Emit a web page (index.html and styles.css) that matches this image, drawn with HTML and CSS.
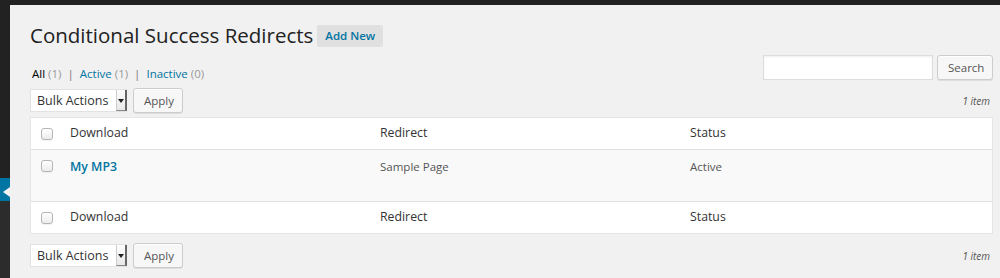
FILE: index.html
```html
<!DOCTYPE html>
<html lang="en">
<head>
    <meta charset="UTF-8">
    <title>Conditional Success Redirects</title>
    <link rel="stylesheet" href="styles.css">
</head>
<body>

    <div class="adminbar"></div>

    <div class="layout">

        <!-- Admin menu (collapsed strip) -->
        <aside class="sidebar">
            <div class="menu-top"></div>
            <div class="menu-current"><span class="menu-arrow"></span></div>
        </aside>

        <main class="wrap">

            <div class="page-title">
                <h2>Conditional Success Redirects</h2>
                <a href="#" class="add-new">Add New</a>
            </div>

            <div class="filter-bar">
                <ul class="subsubsub">
                    <li class="current">All <span class="count">(1)</span></li>
                    <li class="sep">|</li>
                    <li><a href="#">Active</a> <span class="count">(1)</span></li>
                    <li class="sep">|</li>
                    <li><a href="#">Inactive</a> <span class="count">(0)</span></li>
                </ul>
                <form class="search-box">
                    <input type="search" class="search-input">
                    <button type="button" class="button">Search</button>
                </form>
            </div>

            <div class="tablenav">
                <div class="actions">
                    <div class="select">
                        <span class="select-label">Bulk Actions</span>
                        <span class="select-arrow"></span>
                    </div>
                    <button type="button" class="button">Apply</button>
                </div>
                <span class="num-items">1 item</span>
            </div>

            <div class="list-table">
                <div class="row head">
                    <div class="cell check"><span class="checkbox"></span></div>
                    <div class="cell">Download</div>
                    <div class="cell">Redirect</div>
                    <div class="cell">Status</div>
                </div>
                <div class="row item">
                    <div class="cell check"><span class="checkbox"></span></div>
                    <div class="cell"><a href="#" class="row-title">My MP3</a></div>
                    <div class="cell">Sample Page</div>
                    <div class="cell">Active</div>
                </div>
                <div class="row head">
                    <div class="cell check"><span class="checkbox"></span></div>
                    <div class="cell">Download</div>
                    <div class="cell">Redirect</div>
                    <div class="cell">Status</div>
                </div>
            </div>

            <div class="tablenav bottom">
                <div class="actions">
                    <div class="select">
                        <span class="select-label">Bulk Actions</span>
                        <span class="select-arrow"></span>
                    </div>
                    <button type="button" class="button">Apply</button>
                </div>
                <span class="num-items">1 item</span>
            </div>

        </main>
    </div>

</body>
</html>
```

FILE: styles.css
```css
/* General */
body {
    margin: 0;
    background-color: #f1f1f1;
    color: #444;
    font-family: 'Open Sans', sans-serif;
    font-size: 11.5px;
    min-height: 278px;
}

a {
    color: #0074a2;
    text-decoration: none;
}

.adminbar {
    height: 5px;
    background-color: #222;
}

.layout {
    display: flex;
    min-height: 273px;
}

/* Admin menu strip */
.sidebar {
    width: 10px;
    flex-shrink: 0;
    background-color: #2c2c2c;
    display: flex;
    flex-direction: column;
}

.menu-top {
    height: 173px;
    background-color: #222;
}

.menu-current {
    height: 23px;
    background-color: #0074a2;
    display: flex;
    align-items: center;
    justify-content: flex-end;
}

.menu-arrow {
    width: 0;
    height: 0;
    border-top: 5px solid transparent;
    border-bottom: 5px solid transparent;
    border-right: 7px solid #f1f1f1;
    margin-top: 4px;
}

/* Main area */
.wrap {
    flex-grow: 1;
    padding: 0 7px 0 20px;
}

.page-title {
    display: flex;
    align-items: flex-start;
    padding-top: 16px;
}

.page-title h2 {
    margin: 0;
    font-size: 20.5px;
    font-weight: 400;
    line-height: 29px;
    color: #222;
}

.add-new {
    margin-left: 4px;
    margin-top: 4px;
    padding: 0 8px;
    height: 22px;
    line-height: 22px;
    background-color: #e0e0e0;
    border-radius: 2px;
    font-weight: 600;
    font-size: 11.5px;
}

/* Filters + search */
.filter-bar {
    display: flex;
    justify-content: space-between;
    align-items: flex-start;
    height: 25px;
    margin-top: 5px;
}

.subsubsub {
    list-style: none;
    margin: 0;
    padding: 9px 0 0 2px;
    display: flex;
    gap: 6px;
    line-height: 20px;
    color: #666;
}

.subsubsub .current {
    color: #000;
}

.subsubsub .count {
    color: #999;
}

.subsubsub .sep {
    color: #777;
}

.search-box {
    display: flex;
    gap: 4px;
    margin: 0;
}

.search-input {
    width: 170px;
    height: 25px;
    box-sizing: border-box;
    border: 1px solid #ddd;
    background: #fff;
    box-shadow: inset 0 1px 2px rgba(0, 0, 0, 0.07);
    margin: 0;
}

.button {
    height: 25px;
    box-sizing: border-box;
    padding: 0 10px 1px;
    border: 1px solid #ccc;
    border-radius: 3px;
    background: #f7f7f7;
    box-shadow: inset 0 1px 0 #fff, 0 1px 0 rgba(0, 0, 0, 0.08);
    color: #555;
    font-family: 'Open Sans', sans-serif;
    font-size: 11.5px;
    margin: 0;
}

.search-box .button {
    width: 56px;
}

.actions .button {
    width: 50px;
}

/* Table nav */
.tablenav {
    display: flex;
    justify-content: space-between;
    align-items: center;
    height: 25px;
    margin-top: 8px;
}

.tablenav.bottom {
    margin-top: 9px;
}

.actions {
    display: flex;
    align-items: center;
    gap: 6px;
}

.select {
    display: flex;
    align-items: stretch;
    height: 23px;
    width: 97px;
    box-sizing: border-box;
    background: #fff;
    border: 1px solid #e2e2e2;
    border-right: none;
}

.select-label {
    flex-grow: 1;
    padding-left: 6px;
    line-height: 21px;
    color: #333;
    font-size: 12.5px;
}

.select-arrow {
    width: 8px;
    position: relative;
    background: linear-gradient(#fdfdfd, #e8e8e8);
    border-left: 1px solid #ccc;
    border-right: 2px solid #666;
    border-bottom: 1px solid #888;
}

/* small dropdown triangle sits over the arrow box */
.select-arrow::after {
    content: "";
    position: absolute;
    left: 1px;
    top: 9px;
    border-left: 3px solid transparent;
    border-right: 3px solid transparent;
    border-top: 4px solid #222;
}

.num-items {
    font-style: italic;
    font-size: 10px;
    color: #555;
    margin-right: 3px;
}

/* List table */
.list-table {
    margin-top: 4px;
    background: #fff;
    border: 1px solid #e5e5e5;
}

.row {
    display: grid;
    grid-template-columns: 29px 310px 310px 1fr;
}

.row + .row {
    border-top: 1px solid #e1e1e1;
}

.row.head .cell {
    height: 31px;
    box-sizing: border-box;
    padding: 6px 10px 0;
    line-height: 18px;
    font-size: 12.3px;
    color: #333;
}

.row.item {
    background: #f9f9f9;
}

.row.item .cell {
    height: 51px;
    box-sizing: border-box;
    padding: 8px 10px 0;
    line-height: 18px;
    font-size: 11.5px;
    color: #555;
}

.row .cell.check {
    padding: 10px 0 0 10px;
}

.row.item .cell.check {
    padding-top: 10px;
}

.checkbox {
    display: block;
    width: 12px;
    height: 12px;
    box-sizing: border-box;
    border: 1px solid #b5b5b5;
    border-radius: 3px;
    background: linear-gradient(#fff, #ececec);
    box-shadow: 0 1px 0 rgba(0, 0, 0, 0.05);
}

.row-title {
    font-size: 12.3px;
    font-weight: 600;
}
```
